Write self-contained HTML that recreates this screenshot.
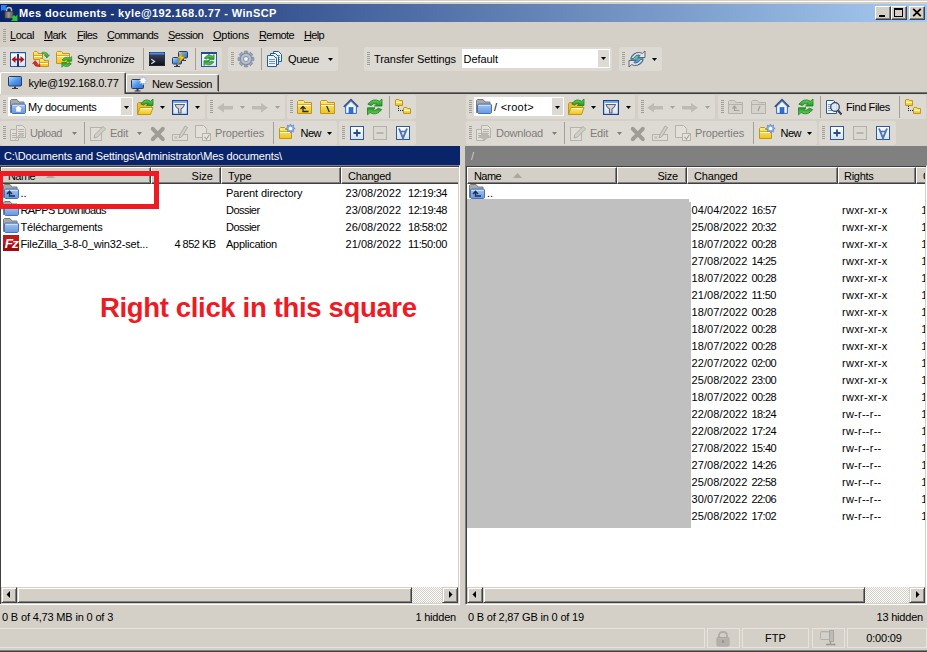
<!DOCTYPE html>
<html><head><meta charset="utf-8"><title>WinSCP</title>
<style>
html,body{margin:0;padding:0}
body{width:927px;height:652px;overflow:hidden;background:#d4d0c8;position:relative;font:11px "Liberation Sans",sans-serif;color:#000}
body>*{position:absolute;box-sizing:border-box}
.t{white-space:nowrap;line-height:13px;height:13px}
#tb{left:0;top:4px;width:927px;height:18px;background:linear-gradient(90deg,#0a246a 0%,#a6caf0 100%)}
body::before{content:"";position:absolute;left:0;top:1px;width:927px;height:1px;background:#fff}
.cb{width:16px;height:14px;background:#d4d0c8;border:1px solid;border-color:#fff #404040 #404040 #fff;box-shadow:inset -1px -1px 0 #808080}
.cb svg{position:absolute;left:0;top:0}
.band{background:#dddad4;border-radius:2.500px}
.grip{width:3px;height:14px;background:repeating-linear-gradient(180deg,#a19e98 0,#a19e98 1px,transparent 1px,transparent 2px)}
.sep{width:1px;background:#a3a09a}
.a{display:block}
.ic{display:block;overflow:visible}
#tabline{left:0;top:92px;width:927px;height:2px;background:#707070;border-bottom:1px solid #404040}
.tab{background:#d4d0c8;border:1px solid;border-color:#fff #404040 #d4d0c8 #fff;box-shadow:inset -1px 0 0 #808080;border-radius:2px 2px 0 0}
.tab.act{border-bottom:0}
.list{background:#fff;border:1px solid;border-color:#808080 #fff #fff #808080;box-shadow:inset 1px 1px 0 #404040,inset -1px -1px 0 #d4d0c8}
.hd{height:17px;background:#d4d0c8;border:1px solid;border-color:#fff #404040 #404040 #fff;box-shadow:inset -1px -1px 0 #808080}
.sbtrack{height:16px;background-color:#ebe9e5;background-image:repeating-conic-gradient(#fff 0 25%,#d4d0c8 0 50%);background-size:2px 2px}
.sbbtn{width:16px;height:16px;background:#d4d0c8;border:1px solid;border-color:#d4d0c8 #404040 #404040 #d4d0c8;box-shadow:inset 1px 1px 0 #fff,inset -1px -1px 0 #808080}
.sbbtn svg{position:absolute;left:-1px;top:-1px}
.sc{height:20px;border:1px solid #e6e4de}
</style></head>
<body>
<svg width="0" height="0" style="position:absolute"><defs>
<linearGradient id="gy" x1="0" y1="0" x2="0" y2="1"><stop offset="0" stop-color="#ffec80"/><stop offset="1" stop-color="#f0c418"/></linearGradient>
<linearGradient id="gb" x1="0" y1="0" x2="0" y2="1"><stop offset="0" stop-color="#a8c6ef"/><stop offset="1" stop-color="#6599de"/></linearGradient>
<linearGradient id="gs" x1="0" y1="0" x2="1" y2="1"><stop offset="0" stop-color="#bfe0ff"/><stop offset="0.5" stop-color="#4f96ee"/><stop offset="1" stop-color="#2a6fd0"/></linearGradient>
<linearGradient id="gg" x1="0" y1="0" x2="0" y2="1"><stop offset="0" stop-color="#6fd45f"/><stop offset="1" stop-color="#1f9a25"/></linearGradient>
<linearGradient id="gk" x1="0" y1="0" x2="0" y2="1"><stop offset="0" stop-color="#414c66"/><stop offset="1" stop-color="#0c0f18"/></linearGradient>
<linearGradient id="gl" x1="0" y1="0" x2="1" y2="0"><stop offset="0" stop-color="#4a4a4a"/><stop offset="0.45" stop-color="#9a9a9a"/><stop offset="1" stop-color="#4c4c4c"/></linearGradient>
<linearGradient id="gw" x1="0" y1="0" x2="0" y2="1"><stop offset="0" stop-color="#ffffff"/><stop offset="1" stop-color="#d6e4f7"/></linearGradient>
</defs></svg>
<div id="tb"></div>
<span class="t" style="left:19px;top:7px;letter-spacing:0.38px;color:#fff;font-weight:bold">Mes documents - kyle@192.168.0.77 - WinSCP</span>
<div class="cb" style="left:875px;top:6px"><svg width="14" height="12"><rect x="3" y="8" width="6" height="2" fill="#000"/></svg></div>
<div class="cb" style="left:891px;top:6px"><svg width="14" height="12"><path d="M2 1h9v9H2z M3 3v6h7V3z" fill="#000" fill-rule="evenodd"/></svg></div>
<div class="cb" style="left:909px;top:6px"><svg width="14" height="12"><path d="M3.200 1.800l7.600 7.400M10.800 1.800l-7.600 7.400" stroke="#000" stroke-width="1.800" fill="none"/></svg></div>
<svg class="ic" style="left:1px;top:5px" width="16" height="16" viewBox="0 0 16 16"><path d="M5.500 7.500V5q0-2.500 2.500-2.500T10.500 5v2.500" fill="none" stroke="#b9b9b9" stroke-width="1.500"/><rect x="3.500" y="6.500" width="9" height="6.800" rx=".6" fill="url(#gl)" stroke="#2e2e2e" stroke-width=".6"/><path d="M0 0h6.500L4.500 2 6 3.500 3.500 6 2 4.500 0 6.500z" fill="#2d82f5"/><path d="M16.500 16H10l2-2-1.500-1.500 2.500-2.500 1.500 1.500 2-2z" fill="#2fc32f"/></svg>
<div class="grip" style="left:3px;top:29px"></div>
<span class="t" style="left:10px;top:29px;letter-spacing:-0.46px"><u>L</u>ocal</span>
<span class="t" style="left:44px;top:29px;letter-spacing:-0.61px"><u>M</u>ark</span>
<span class="t" style="left:77px;top:29px;letter-spacing:-0.64px"><u>F</u>iles</span>
<span class="t" style="left:107px;top:29px;letter-spacing:-0.65px"><u>C</u>ommands</span>
<span class="t" style="left:168px;top:29px;letter-spacing:-0.59px"><u>S</u>ession</span>
<span class="t" style="left:213px;top:29px;letter-spacing:-0.27px"><u>O</u>ptions</span>
<span class="t" style="left:259px;top:29px;letter-spacing:-0.59px"><u>R</u>emote</span>
<span class="t" style="left:304px;top:29px;letter-spacing:-0.66px"><u>H</u>elp</span>
<div class="band" style="left:0px;top:47px;width:222px;height:24px"></div>
<div class="grip" style="left:3px;top:52px"></div>
<svg class="ic" style="left:10px;top:52px" width="16" height="16" viewBox="0 0 16 16"><rect x=".5" y=".5" width="15" height="14" fill="url(#gw)" stroke="#2c5aa0"/><rect x="7" y="0" width="2" height="15" fill="#1a3a80"/><rect x="1" y="1" width="14" height="1" fill="#bcd3f2"/><path d="M1.500 7.500L5.500 4v2.500h5V4l4 3.500-4 3.500V8.500h-5V11z" fill="#b01414"/></svg>
<svg class="ic" style="left:33px;top:51px" width="16" height="16" viewBox="0 0 16 16"><path d="M0.5 8.5V1.5l1-1h2.5l1 1v1h4.5v6z" fill="url(#gy)" stroke="#c4951a"/><path d="M1 4.5h8" stroke="#d9aa22"/><path d="M1 5.5h8" stroke="#fffce6"/><path d="M6.5 15.5V8.5l1-1h2.5l1 1v1h4.5v6z" fill="url(#gy)" stroke="#c4951a"/><path d="M7 11.5h8" stroke="#d9aa22"/><path d="M7 12.5h8" stroke="#fffce6"/><path d="M9 1.200h2.500q3.200 0 3.600 2.800h1.400l-2.600 3-2.600-3h1.400q-.3-1.100-1.500-1.100H9z" fill="url(#gg)" stroke="#1b7d22" stroke-width=".5"/><path d="M9 1.200h2.500q3.200 0 3.600 2.800h1.400l-2.600 3-2.600-3h1.400q-.3-1.100-1.500-1.100H9z" transform="rotate(180 8 8.300)" fill="#e02828" stroke="#a31212" stroke-width=".5"/></svg>
<svg class="ic" style="left:56px;top:51px" width="16" height="16" viewBox="0 0 16 16"><path d="M0.5 12.5V1.5l1-1h4l1 1v1h7v10z" fill="url(#gy)" stroke="#c4951a"/><path d="M1 4.5h12" stroke="#d9aa22"/><path d="M1 5.5h12" stroke="#fffce6"/><g transform="translate(5.5 5.5) scale(0.68)"><path d="M12.500 2.200Q6-1.500 .8 5.200l3.400 1.300Q6.500 3.800 9.800 4.800L7.500 7H15V0z" fill="url(#gg)" stroke="#1b7d22" stroke-width="0.88" stroke-linejoin="round"/><path d="M12.500 2.200Q6-1.500 .8 5.200l3.400 1.300Q6.500 3.800 9.800 4.800L7.500 7H15V0z" transform="rotate(180 7.750 7.900)" fill="url(#gg)" stroke="#1b7d22" stroke-width="0.88" stroke-linejoin="round"/></g></svg>
<span class="t" style="left:77px;top:53px;letter-spacing:-0.28px;">Synchronize</span>
<div class="sep" style="left:143px;top:48px;height:22px"></div>
<svg class="ic" style="left:149px;top:52px" width="16" height="16" viewBox="0 0 16 16"><rect x=".3" y=".3" width="15.400" height="13.400" fill="url(#gk)" stroke="#0a0f20" stroke-width=".6"/><rect x=".6" y=".6" width="14.800" height="1.900" fill="#4a8cf0"/><path d="M2.300 7.300l3.300 2.200-3.300 2.200" fill="none" stroke="#e4e4e4" stroke-width="1.100"/></svg>
<svg class="ic" style="left:172px;top:51px" width="16" height="16" viewBox="0 0 16 16"><rect x="6.5" y="0.5" width="9" height="6.5" rx="1" fill="url(#gs)" stroke="#2a3a58"/><path d="M10.0 7.5v1.500h-2v1h6v-1h-2v-1.500z" fill="#2a3a58"/><rect x="0.5" y="6.5" width="9" height="6.5" rx="1" fill="url(#gs)" stroke="#2a3a58"/><path d="M4.0 13.5v1.500h-2v1h6v-1h-2v-1.500z" fill="#2a3a58"/><path d="M11.500 1l-6.300 6.300h3.300l-3.300 6.500 7.800-8.300H9.600z" fill="#f8c822" stroke="#b98a08" stroke-width=".7" stroke-linejoin="round"/></svg>
<div class="sep" style="left:195px;top:48px;height:22px"></div>
<svg class="ic" style="left:201px;top:52px" width="16" height="16" viewBox="0 0 16 16"><rect x=".5" y=".5" width="15" height="14" fill="url(#gw)" stroke="#2c5aa0"/><rect x="0" y="0" width="16" height="2" fill="#244a94"/><path d="M8 2v12" stroke="#244a94" stroke-dasharray="2 1"/><g transform="translate(2.6 2.5) scale(0.7)"><path d="M12.500 2.200Q6-1.500 .8 5.200l3.400 1.300Q6.500 3.800 9.800 4.800L7.500 7H15V0z" fill="url(#gg)" stroke="#1b7d22" stroke-width="0.86" stroke-linejoin="round"/><path d="M12.500 2.200Q6-1.500 .8 5.200l3.400 1.300Q6.500 3.800 9.800 4.800L7.500 7H15V0z" transform="rotate(180 7.750 7.900)" fill="url(#gg)" stroke="#1b7d22" stroke-width="0.86" stroke-linejoin="round"/></g></svg>
<div class="band" style="left:228px;top:47px;width:110px;height:24px"></div>
<div class="grip" style="left:231px;top:52px"></div>
<svg class="ic" style="left:238px;top:51px" width="16" height="16" viewBox="0 0 16 16"><g transform="translate(8 8)"><g fill="#97a3b8" stroke="#6d7a92" stroke-width=".5"><rect x="-1.800" y="-8" width="3.600" height="4" rx=".6" transform="rotate(0)"/><rect x="-1.800" y="-8" width="3.600" height="4" rx=".6" transform="rotate(45)"/><rect x="-1.800" y="-8" width="3.600" height="4" rx=".6" transform="rotate(90)"/><rect x="-1.800" y="-8" width="3.600" height="4" rx=".6" transform="rotate(135)"/><rect x="-1.800" y="-8" width="3.600" height="4" rx=".6" transform="rotate(180)"/><rect x="-1.800" y="-8" width="3.600" height="4" rx=".6" transform="rotate(225)"/><rect x="-1.800" y="-8" width="3.600" height="4" rx=".6" transform="rotate(270)"/><rect x="-1.800" y="-8" width="3.600" height="4" rx=".6" transform="rotate(315)"/><circle r="5.800"/></g><circle r="5" fill="#b7c0d0"/><circle r="2.600" fill="#dddad4" stroke="#7d8aa3" stroke-width=".8"/><circle r="1.500" fill="#f4f3f0"/></g></svg>
<div class="sep" style="left:261px;top:48px;height:22px"></div>
<svg class="ic" style="left:267px;top:51px" width="16" height="16" viewBox="0 0 16 16"><path d="M6.5 0.5h5l3 3v7h-8z" fill="#eef4fc" stroke="#2c5aa0"/><path d="M8 4.5h5" stroke="#6a93cf"/><path d="M8 6.5h5" stroke="#6a93cf"/><path d="M8 8.5h5" stroke="#6a93cf"/><path d="M3.5 2.5h5l3 3v8h-8z" fill="#eef4fc" stroke="#2c5aa0"/><path d="M5 6.5h5" stroke="#6a93cf"/><path d="M5 8.5h5" stroke="#6a93cf"/><path d="M5 10.5h5" stroke="#6a93cf"/><path d="M0.5 4.5h6l3 3v8h-9z" fill="#eef4fc" stroke="#2c5aa0"/><path d="M2 8.5h6" stroke="#6a93cf"/><path d="M2 10.5h6" stroke="#6a93cf"/><path d="M2 12.5h6" stroke="#6a93cf"/></svg>
<span class="t" style="left:288px;top:53px;letter-spacing:-0.4px;">Queue</span>
<svg class="a" style="left:327px;top:58px" width="7" height="4" viewBox="0 0 7 4"><path d="M1 0h5L3.500 3z" fill="#000"/></svg>
<div class="band" style="left:364px;top:47px;width:248px;height:24px"></div>
<div class="grip" style="left:367px;top:52px"></div>
<span class="t" style="left:374px;top:53px;letter-spacing:-0.08px;">Transfer Settings</span>
<div style="left:462px;top:49px;width:148px;height:19px;background:#fff;"></div>
<span class="t" style="left:463.5px;top:53px;letter-spacing:-0.05px;">Default</span>
<div style="left:598px;top:50px;width:11px;height:17px;background:#dddad4;"></div>
<svg class="a" style="left:600px;top:57px" width="7" height="4" viewBox="0 0 7 4"><path d="M1 0h5L3.500 3z" fill="#000"/></svg>
<div class="band" style="left:619px;top:47px;width:43px;height:24px"></div>
<div class="grip" style="left:622px;top:52px"></div>
<svg class="ic" style="left:629px;top:51px" width="16" height="16" viewBox="0 0 16 16"><circle cx="8" cy="8" r="6" fill="#4a94f0" stroke="#2b5fae" stroke-width=".8"/><path d="M3 7l2.500-2.500 3.500.5-1 2-3 1.500zM9.500 8.500l3.500-1.500.5 3-2.500 2.500zM5 11l2 .5.500 2-2-.5z" fill="#62d45c"/><path d="M13.400 2.400Q7-1 1.800 7.200l2.500.6Q7 3 11.200 4.400L9 6.500h7V0z" fill="#dfe3ea" stroke="#4f5b72" stroke-width=".9" stroke-linejoin="round"/><g transform="rotate(180 8 8)"><path d="M13.400 2.400Q7-1 1.800 7.200l2.500.6Q7 3 11.200 4.400L9 6.500h7V0z" fill="#dfe3ea" stroke="#4f5b72" stroke-width=".9" stroke-linejoin="round"/></g></svg>
<svg class="a" style="left:651px;top:58px" width="7" height="4" viewBox="0 0 7 4"><path d="M1 0h5L3.500 3z" fill="#000"/></svg>
<div id="tabline"></div>
<div class="tab act" style="left:0px;top:72px;width:126px;height:22px"></div>
<div class="tab" style="left:126px;top:74px;width:93px;height:18px"></div>
<svg class="ic" style="left:7px;top:75px" width="16" height="16" viewBox="0 0 16 16"><rect x="1.5" y="1.5" width="13" height="9.5" rx="1" fill="url(#gs)" stroke="#2a3a58"/><path d="M7.0 11.5v1.500h-2v1h6v-1h-2v-1.500z" fill="#2a3a58"/></svg>
<span class="t" style="left:28.5px;top:76.5px;letter-spacing:-0.29px;">kyle@192.168.0.77</span>
<svg class="ic" style="left:131px;top:76px" width="16" height="16" viewBox="0 0 16 16"><rect x="0.5" y="3.5" width="12" height="9" rx="1" fill="url(#gs)" stroke="#2a3a58"/><path d="M5.5 13v1.500h-2v1h6v-1h-2v-1.500z" fill="#2a3a58"/><path d="M12 0l.9 2.300 2.300-.9-.9 2.300 2.300.9-2.300.9.900 2.300-2.300-.9-.9 2.300-.9-2.300-2.300.9.900-2.300-2.300-.9 2.300-.9-.9-2.300 2.300.9z" fill="#fff" stroke="#8fa8d0" stroke-width=".5"/></svg>
<span class="t" style="left:152px;top:77.5px;letter-spacing:-0.38px;">New Session</span>
<div class="band" style="left:0px;top:95px;width:205px;height:24px"></div>
<div class="grip" style="left:3px;top:100px"></div>
<div style="left:8px;top:97px;width:125px;height:19px;background:#fff;"></div>
<svg class="ic" style="left:10px;top:99px" width="16" height="16" viewBox="0 0 16 16"><path d="M.5 13.500V1.500l1-1h5.500l2 2.500h5v10.500z" fill="#aaa9a6" stroke="#7c7b78"/><path d="M2.500 14.500h12l1-1V6l-1-1h-12l-1 1v7.500z" fill="url(#gb)" stroke="#3f74c4"/><path d="M2.500 6.500h12" stroke="#d3e3f8" opacity=".9"/><path d="M8.500 6.300l4.200 3.500h-1.500v3.200h-5.400v-3.200h-1.500z" fill="#fff" stroke="#7a8cab" stroke-width=".6"/></svg>
<span class="t" style="left:28px;top:101px;letter-spacing:-0.25px;">My documents</span>
<div style="left:121px;top:98px;width:11px;height:17px;background:#dddad4;"></div>
<svg class="a" style="left:123px;top:106px" width="7" height="4" viewBox="0 0 7 4"><path d="M1 0h5L3.500 3z" fill="#000"/></svg>
<svg class="ic" style="left:137px;top:99px" width="16" height="16" viewBox="0 0 16 16"><path d="M.5 15.500V4.500l1-1h3.500l1 1.500h8.500v3.500" fill="#eebf2c" stroke="#c4951a"/><path d="M.5 15.500l2.500-7h13l-2.500 7z" fill="url(#gy)" stroke="#c4951a"/><path d="M3.700 9.500h11" stroke="#fffbd8"/><path d="M13.500 2.300Q8-1.500 3.800 5l2.700 1Q8.500 3.500 11.300 4.600L9.500 6.500H16V0z" fill="url(#gg)" stroke="#1b7d22" stroke-width=".8" stroke-linejoin="round"/></svg>
<svg class="a" style="left:159px;top:106px" width="7" height="4" viewBox="0 0 7 4"><path d="M1 0h5L3.500 3z" fill="#000"/></svg>
<svg class="ic" style="left:172px;top:100px" width="16" height="16" viewBox="0 0 16 16"><rect x=".6" y=".6" width="14.800" height="13.800" fill="url(#gw)" stroke="#1f448f" stroke-width="1.200"/><rect x="1.200" y="1.200" width="13.600" height="1.600" fill="#5b97ee"/><path d="M3 4.500h9.500q-.5 2.500-3.500 4.500v4h-2.500v-4q-3-2-3.500-4.500z" fill="#d3d5d9" stroke="#5f636c" stroke-width="1.100" stroke-linejoin="round"/></svg>
<svg class="a" style="left:194px;top:106px" width="7" height="4" viewBox="0 0 7 4"><path d="M1 0h5L3.500 3z" fill="#000"/></svg>
<div class="band" style="left:207px;top:95px;width:78px;height:24px"></div>
<div class="grip" style="left:210px;top:100px"></div>
<svg class="ic" style="left:217px;top:99px" width="16" height="16" viewBox="0 0 16 16"><path d="M0 8.700L7 4v3h9v3.400H7v3z" fill="#bebbb5"/></svg>
<svg class="a" style="left:239px;top:106px" width="7" height="4" viewBox="0 0 7 4"><path d="M1 0h5L3.500 3z" fill="#a5a29c"/></svg>
<svg class="ic" style="left:252px;top:99px" width="16" height="16" viewBox="0 0 16 16"><path d="M16 8.700L9 4v3H0v3.400h9v3z" fill="#bebbb5"/></svg>
<svg class="a" style="left:274px;top:106px" width="7" height="4" viewBox="0 0 7 4"><path d="M1 0h5L3.500 3z" fill="#a5a29c"/></svg>
<div class="band" style="left:287px;top:95px;width:129px;height:24px"></div>
<div class="grip" style="left:290px;top:100px"></div>
<svg class="ic" style="left:296.5px;top:99px" width="16" height="16" viewBox="0 0 16 16"><path d="M0.5 14.5V2.5l1-1h5l1 1v1h7v11z" fill="url(#gy)" stroke="#c4951a"/><path d="M1 5.5h13" stroke="#d9aa22"/><path d="M1 6.5h13" stroke="#fffce6"/><path d="M6 8v4.500h5.500M3.500 10l2.500-2.500 2.500 2.500" fill="none" stroke="#1c2c4c" stroke-width="1.300"/></svg>
<svg class="ic" style="left:320px;top:99px" width="16" height="16" viewBox="0 0 16 16"><path d="M0.5 14.5V2.5l1-1h5l1 1v1h7v11z" fill="url(#gy)" stroke="#c4951a"/><path d="M1 5.5h13" stroke="#d9aa22"/><path d="M1 6.5h13" stroke="#fffce6"/><path d="M6.700 7l2.600 6" stroke="#1c2c4c" stroke-width="1.300"/></svg>
<svg class="ic" style="left:343px;top:98px" width="16" height="16" viewBox="0 0 16 16"><path d="M2.500 8v7.500h11V8L8 2.500z" fill="#b4cff3" stroke="#4a78c0"/><path d="M3.500 9v5.500h9V9L8 4.500z" fill="#f4f8fe"/><path d="M.8 8.800L8 1.600l7.200 7.200" fill="none" stroke="#3b5684" stroke-width="1.700"/><rect x="6" y="9.500" width="4" height="6" fill="#2f6fd8" stroke="#2458b8" stroke-width=".6"/></svg>
<svg class="ic" style="left:367px;top:99px" width="16" height="16" viewBox="0 0 16 16"><path d="M12.500 2.200Q6-1.500 .8 5.200l3.400 1.300Q6.500 3.800 9.800 4.800L7.500 7H15V0z" fill="url(#gg)" stroke="#1b7d22" stroke-width=".8" stroke-linejoin="round"/><path d="M12.500 2.200Q6-1.500 .8 5.200l3.400 1.300Q6.500 3.800 9.800 4.800L7.500 7H15V0z" transform="rotate(180 7.750 7.900)" fill="url(#gg)" stroke="#1b7d22" stroke-width=".8" stroke-linejoin="round"/></svg>
<div class="sep" style="left:389px;top:96px;height:22px"></div>
<svg class="ic" style="left:395px;top:99px" width="16" height="16" viewBox="0 0 16 16"><path d="M0.5 6.5V1l.5-.5h3l.5.500v.5h3v5z" fill="url(#gy)" stroke="#c4951a"/><path d="M1 3.5h6" stroke="#fffce0"/><path d="M8.5 14.5V9l.5-.5h3l.5.500v.5h3v5z" fill="url(#gy)" stroke="#c4951a"/><path d="M9 11.5h6" stroke="#fffce0"/><path d="M3 7h1v1h-1zM3 9h1v1h-1zM3 11h1v1h-1zM5 11h1v1h-1zM7 11h1v1h-1z" fill="#222"/></svg>
<div class="band" style="left:0px;top:121px;width:337px;height:24px"></div>
<div class="grip" style="left:3px;top:126px"></div>
<svg class="ic" style="left:10px;top:125px" width="16" height="16" viewBox="0 0 16 16"><path d="M0.5 4.5h5l3 3v8h-8z" fill="#e3e0da" stroke="#b5b2ac"/><path d="M2 8.5h5" stroke="#b5b2ac"/><path d="M2 10.5h5" stroke="#b5b2ac"/><path d="M2 12.5h5" stroke="#b5b2ac"/><path d="M6.5 0.5h6l3 3v9h-9z" fill="#e3e0da" stroke="#b5b2ac"/><path d="M8 4.5h6" stroke="#b5b2ac"/><path d="M8 6.5h6" stroke="#b5b2ac"/><path d="M8 8.5h6" stroke="#b5b2ac"/><path d="M8 10.5h6" stroke="#b5b2ac"/><path d="M5 15l5-5v2.500h3V9h-3z" fill="#c6c3bd" stroke="#b5b2ac" stroke-width=".5"/></svg>
<span class="t" style="left:30px;top:127px;letter-spacing:-0.48px;color:#7f7d7a">Upload</span>
<svg class="a" style="left:71px;top:132px" width="7" height="4" viewBox="0 0 7 4"><path d="M1 0h5L3.500 3z" fill="#7f7d7a"/></svg>
<div class="sep" style="left:84px;top:122px;height:22px"></div>
<svg class="ic" style="left:90px;top:125px" width="16" height="16" viewBox="0 0 16 16"><rect x=".5" y="2.500" width="11" height="13" fill="#e0ddd7" stroke="#b5b2ac"/><path d="M4 13l1-3.500L13 1.500l2.500 2.500-8 8z" fill="#d2cfc9" stroke="#aaa7a1" stroke-width=".9"/></svg>
<span class="t" style="left:110px;top:127px;letter-spacing:-0.24px;color:#7f7d7a">Edit</span>
<svg class="a" style="left:136px;top:132px" width="7" height="4" viewBox="0 0 7 4"><path d="M1 0h5L3.500 3z" fill="#7f7d7a"/></svg>
<svg class="ic" style="left:149.5px;top:126px" width="16" height="16" viewBox="0 0 16 16"><path d="M2.800 2.800l10 10.400M12.800 2.800L2.800 13.200" stroke="#a09d97" stroke-width="4" stroke-linecap="round"/></svg>
<svg class="ic" style="left:172px;top:125px" width="16" height="16" viewBox="0 0 16 16"><rect x=".5" y="9.500" width="15" height="6" fill="#e0ddd7" stroke="#b5b2ac"/><path d="M7 13l.8-3L13 1l2.500 1.500-5.500 9z" fill="#d2cfc9" stroke="#aaa7a1" stroke-width=".9"/><path d="M2.500 11l3 3m0-3l-3 3" stroke="#b5b2ac" stroke-width=".9"/></svg>
<svg class="ic" style="left:195px;top:125px" width="16" height="16" viewBox="0 0 16 16"><path d="M.5 .5h8l3 3v9H.5z" fill="#e3e0da" stroke="#b5b2ac"/><rect x="7.500" y="8.500" width="8" height="7" fill="#e6e3dd" stroke="#b5b2ac"/><path d="M9.500 12l2 2 3-4.500" fill="none" stroke="#aaa7a1" stroke-width="1.200"/></svg>
<span class="t" style="left:215px;top:127px;letter-spacing:-0.11px;color:#7f7d7a">Properties</span>
<div class="sep" style="left:273px;top:122px;height:22px"></div>
<svg class="ic" style="left:279px;top:124px" width="16" height="16" viewBox="0 0 16 16"><path d="M0.5 14.5V4.5l1-1h4l1 1v1h6v9z" fill="url(#gy)" stroke="#c4951a"/><path d="M1 7.5h11" stroke="#d9aa22"/><path d="M1 8.5h11" stroke="#fffce6"/><g transform="translate(11.500 4.500)"><path d="M0-4.500l1.100 2 2.100-.9-.5 2.200 2 1.200-2 1.200.5 2.200-2.100-.9-1.100 2-1.100-2-2.100.9.500-2.200-2-1.200 2-1.200-.5-2.200 2.100.9z" fill="#8fb2e8" stroke="#4f7cc4" stroke-width=".6"/><circle r="1.700" fill="#fff"/></g></svg>
<span class="t" style="left:300.5px;top:127px;letter-spacing:-0.5px;">New</span>
<svg class="a" style="left:326px;top:132px" width="7" height="4" viewBox="0 0 7 4"><path d="M1 0h5L3.500 3z" fill="#000"/></svg>
<div class="band" style="left:339px;top:121px;width:77px;height:24px"></div>
<div class="grip" style="left:342px;top:126px"></div>
<svg class="ic" style="left:350px;top:126px" width="16" height="16" viewBox="0 0 16 16"><rect x=".5" y=".5" width="13" height="13" fill="url(#gw)" stroke="#2c5aa0"/><path d="M7 3.500v7M3.500 7h7" stroke="#244a94" stroke-width="1.800"/></svg>
<svg class="ic" style="left:373px;top:126px" width="16" height="16" viewBox="0 0 16 16"><rect x=".5" y=".5" width="13" height="13" fill="#dbd8d2" stroke="#b5b2ac"/><path d="M3.500 7h7" stroke="#b5b2ac" stroke-width="1.800"/></svg>
<svg class="ic" style="left:396px;top:126px" width="16" height="16" viewBox="0 0 16 16"><rect x=".5" y=".5" width="13" height="13" fill="url(#gw)" stroke="#2c5aa0"/><path d="M3 2.500l4 9.500 4-9.500" fill="none" stroke="#4f72b4" stroke-width="1.900"/><path d="M4 5.500h6" stroke="#4f72b4" stroke-width="1.500"/></svg>
<div class="band" style="left:466px;top:95px;width:169px;height:24px"></div>
<div class="grip" style="left:469px;top:100px"></div>
<div style="left:474px;top:97px;width:90px;height:19px;background:#fff;"></div>
<svg class="ic" style="left:476px;top:99px" width="16" height="16" viewBox="0 0 16 16"><path d="M.5 13.500V1.500l1-1h5.500l2 2.500h5v10.500z" fill="#aaa9a6" stroke="#7c7b78"/><path d="M2.500 14.500h12l1-1V6l-1-1h-12l-1 1v7.500z" fill="url(#gb)" stroke="#3f74c4"/><path d="M2.500 6.500h12" stroke="#d3e3f8" opacity=".9"/></svg>
<span class="t" style="left:494px;top:101px;letter-spacing:0.26px;">/ &lt;root&gt;</span>
<div style="left:552px;top:98px;width:11px;height:17px;background:#dddad4;"></div>
<svg class="a" style="left:554px;top:106px" width="7" height="4" viewBox="0 0 7 4"><path d="M1 0h5L3.500 3z" fill="#000"/></svg>
<svg class="ic" style="left:568px;top:99px" width="16" height="16" viewBox="0 0 16 16"><path d="M.5 15.500V4.500l1-1h3.500l1 1.500h8.500v3.500" fill="#eebf2c" stroke="#c4951a"/><path d="M.5 15.500l2.500-7h13l-2.500 7z" fill="url(#gy)" stroke="#c4951a"/><path d="M3.700 9.500h11" stroke="#fffbd8"/><path d="M13.500 2.300Q8-1.500 3.800 5l2.700 1Q8.500 3.500 11.300 4.600L9.500 6.500H16V0z" fill="url(#gg)" stroke="#1b7d22" stroke-width=".8" stroke-linejoin="round"/></svg>
<svg class="a" style="left:590px;top:106px" width="7" height="4" viewBox="0 0 7 4"><path d="M1 0h5L3.500 3z" fill="#000"/></svg>
<svg class="ic" style="left:603px;top:100px" width="16" height="16" viewBox="0 0 16 16"><rect x=".6" y=".6" width="14.800" height="13.800" fill="url(#gw)" stroke="#1f448f" stroke-width="1.200"/><rect x="1.200" y="1.200" width="13.600" height="1.600" fill="#5b97ee"/><path d="M3 4.500h9.500q-.5 2.500-3.500 4.500v4h-2.500v-4q-3-2-3.500-4.500z" fill="#d3d5d9" stroke="#5f636c" stroke-width="1.100" stroke-linejoin="round"/></svg>
<svg class="a" style="left:625px;top:106px" width="7" height="4" viewBox="0 0 7 4"><path d="M1 0h5L3.500 3z" fill="#000"/></svg>
<div class="band" style="left:638px;top:95px;width:77px;height:24px"></div>
<div class="grip" style="left:641px;top:100px"></div>
<svg class="ic" style="left:647px;top:99px" width="16" height="16" viewBox="0 0 16 16"><path d="M0 8.700L7 4v3h9v3.400H7v3z" fill="#bebbb5"/></svg>
<svg class="a" style="left:669px;top:106px" width="7" height="4" viewBox="0 0 7 4"><path d="M1 0h5L3.500 3z" fill="#a5a29c"/></svg>
<svg class="ic" style="left:682px;top:99px" width="16" height="16" viewBox="0 0 16 16"><path d="M16 8.700L9 4v3H0v3.400h9v3z" fill="#bebbb5"/></svg>
<svg class="a" style="left:704px;top:106px" width="7" height="4" viewBox="0 0 7 4"><path d="M1 0h5L3.500 3z" fill="#a5a29c"/></svg>
<div class="band" style="left:718px;top:95px;width:208px;height:24px"></div>
<div class="grip" style="left:721px;top:100px"></div>
<svg class="ic" style="left:728px;top:99px" width="16" height="16" viewBox="0 0 16 16"><path d="M0.5 14.5V2.5l1-1h5l1 1v1h7v11z" fill="#d5d2cc" stroke="#b5b2ac"/><path d="M1 5.5h13" stroke="#b5b2ac"/><path d="M6.500 7.500v4h5M4.500 9.500l2-2.300 2 2.300" fill="none" stroke="#a29f99" stroke-width="1.200"/></svg>
<svg class="ic" style="left:751px;top:99px" width="16" height="16" viewBox="0 0 16 16"><path d="M0.5 14.5V2.5l1-1h5l1 1v1h7v11z" fill="#d5d2cc" stroke="#b5b2ac"/><path d="M1 5.5h13" stroke="#b5b2ac"/><path d="M9 7l-2 5" stroke="#a29f99" stroke-width="1.200"/></svg>
<svg class="ic" style="left:774px;top:98px" width="16" height="16" viewBox="0 0 16 16"><path d="M2.500 8v7.500h11V8L8 2.500z" fill="#b4cff3" stroke="#4a78c0"/><path d="M3.500 9v5.500h9V9L8 4.500z" fill="#f4f8fe"/><path d="M.8 8.800L8 1.600l7.200 7.200" fill="none" stroke="#3b5684" stroke-width="1.700"/><rect x="6" y="9.500" width="4" height="6" fill="#2f6fd8" stroke="#2458b8" stroke-width=".6"/></svg>
<svg class="ic" style="left:798px;top:99px" width="16" height="16" viewBox="0 0 16 16"><path d="M12.500 2.200Q6-1.500 .8 5.200l3.400 1.300Q6.500 3.800 9.800 4.800L7.500 7H15V0z" fill="url(#gg)" stroke="#1b7d22" stroke-width=".8" stroke-linejoin="round"/><path d="M12.500 2.200Q6-1.500 .8 5.200l3.400 1.300Q6.500 3.800 9.800 4.800L7.500 7H15V0z" transform="rotate(180 7.750 7.900)" fill="url(#gg)" stroke="#1b7d22" stroke-width=".8" stroke-linejoin="round"/></svg>
<div class="sep" style="left:820px;top:96px;height:22px"></div>
<svg class="ic" style="left:826px;top:100px" width="16" height="16" viewBox="0 0 16 16"><path d="M0.5 0.5h7l3 3v10h-10z" fill="#f4f8fe" stroke="#2c5aa0"/><path d="M2 4.5h7" stroke="#7da2d8"/><path d="M2 6.5h7" stroke="#7da2d8"/><path d="M2 8.5h7" stroke="#7da2d8"/><path d="M2 10.5h7" stroke="#7da2d8"/><circle cx="9" cy="7" r="4.300" fill="#dcebfb" fill-opacity=".85" stroke="#3a3f4c" stroke-width="1.200"/><path d="M12 10.500l3.500 4" stroke="#3a3f4c" stroke-width="2"/></svg>
<span class="t" style="left:846px;top:101px;letter-spacing:-0.37px;">Find Files</span>
<div class="sep" style="left:899px;top:96px;height:22px"></div>
<svg class="ic" style="left:905px;top:99px" width="16" height="16" viewBox="0 0 16 16"><path d="M0.5 6.5V1l.5-.5h3l.5.500v.5h3v5z" fill="url(#gy)" stroke="#c4951a"/><path d="M1 3.5h6" stroke="#fffce0"/><path d="M8.5 14.5V9l.5-.5h3l.5.500v.5h3v5z" fill="url(#gy)" stroke="#c4951a"/><path d="M9 11.5h6" stroke="#fffce0"/><path d="M3 7h1v1h-1zM3 9h1v1h-1zM3 11h1v1h-1zM5 11h1v1h-1zM7 11h1v1h-1z" fill="#222"/></svg>
<div class="band" style="left:466px;top:121px;width:351px;height:24px"></div>
<div class="grip" style="left:469px;top:126px"></div>
<svg class="ic" style="left:476px;top:125px" width="16" height="16" viewBox="0 0 16 16"><path d="M0.5 4.5h5l3 3v8h-8z" fill="#e3e0da" stroke="#b5b2ac"/><path d="M2 8.5h5" stroke="#b5b2ac"/><path d="M2 10.5h5" stroke="#b5b2ac"/><path d="M2 12.5h5" stroke="#b5b2ac"/><path d="M5.5 0.5h6l3 3v9h-9z" fill="#e3e0da" stroke="#b5b2ac"/><path d="M7 4.5h6" stroke="#b5b2ac"/><path d="M7 6.5h6" stroke="#b5b2ac"/><path d="M7 8.5h6" stroke="#b5b2ac"/><path d="M7 10.5h6" stroke="#b5b2ac"/><path d="M5.500 8h6v3h2.500l-5.500 4.500-5.500-4.500H5.500z" fill="#bab7b1" stroke="#b5b2ac" stroke-width=".5"/></svg>
<span class="t" style="left:496px;top:127px;letter-spacing:-0.24px;color:#7f7d7a">Download</span>
<svg class="a" style="left:551px;top:132px" width="7" height="4" viewBox="0 0 7 4"><path d="M1 0h5L3.500 3z" fill="#7f7d7a"/></svg>
<div class="sep" style="left:564px;top:122px;height:22px"></div>
<svg class="ic" style="left:570px;top:125px" width="16" height="16" viewBox="0 0 16 16"><rect x=".5" y="2.500" width="11" height="13" fill="#e0ddd7" stroke="#b5b2ac"/><path d="M4 13l1-3.500L13 1.500l2.500 2.500-8 8z" fill="#d2cfc9" stroke="#aaa7a1" stroke-width=".9"/></svg>
<span class="t" style="left:590px;top:127px;letter-spacing:-0.24px;color:#7f7d7a">Edit</span>
<svg class="a" style="left:616px;top:132px" width="7" height="4" viewBox="0 0 7 4"><path d="M1 0h5L3.500 3z" fill="#7f7d7a"/></svg>
<svg class="ic" style="left:629.5px;top:126px" width="16" height="16" viewBox="0 0 16 16"><path d="M2.800 2.800l10 10.400M12.800 2.800L2.800 13.200" stroke="#a09d97" stroke-width="4" stroke-linecap="round"/></svg>
<svg class="ic" style="left:652px;top:125px" width="16" height="16" viewBox="0 0 16 16"><rect x=".5" y="9.500" width="15" height="6" fill="#e0ddd7" stroke="#b5b2ac"/><path d="M7 13l.8-3L13 1l2.500 1.500-5.500 9z" fill="#d2cfc9" stroke="#aaa7a1" stroke-width=".9"/><path d="M2.500 11l3 3m0-3l-3 3" stroke="#b5b2ac" stroke-width=".9"/></svg>
<svg class="ic" style="left:675px;top:125px" width="16" height="16" viewBox="0 0 16 16"><path d="M.5 .5h8l3 3v9H.5z" fill="#e3e0da" stroke="#b5b2ac"/><rect x="7.500" y="8.500" width="8" height="7" fill="#e6e3dd" stroke="#b5b2ac"/><path d="M9.500 12l2 2 3-4.500" fill="none" stroke="#aaa7a1" stroke-width="1.200"/></svg>
<span class="t" style="left:695px;top:127px;letter-spacing:-0.11px;color:#7f7d7a">Properties</span>
<div class="sep" style="left:753px;top:122px;height:22px"></div>
<svg class="ic" style="left:759px;top:124px" width="16" height="16" viewBox="0 0 16 16"><path d="M0.5 14.5V4.5l1-1h4l1 1v1h6v9z" fill="url(#gy)" stroke="#c4951a"/><path d="M1 7.5h11" stroke="#d9aa22"/><path d="M1 8.5h11" stroke="#fffce6"/><g transform="translate(11.500 4.500)"><path d="M0-4.500l1.100 2 2.100-.9-.5 2.200 2 1.200-2 1.200.5 2.200-2.100-.9-1.100 2-1.100-2-2.100.9.500-2.200-2-1.200 2-1.200-.5-2.200 2.100.9z" fill="#8fb2e8" stroke="#4f7cc4" stroke-width=".6"/><circle r="1.700" fill="#fff"/></g></svg>
<span class="t" style="left:780.5px;top:127px;letter-spacing:-0.5px;">New</span>
<svg class="a" style="left:806px;top:132px" width="7" height="4" viewBox="0 0 7 4"><path d="M1 0h5L3.500 3z" fill="#000"/></svg>
<div class="band" style="left:819px;top:121px;width:77px;height:24px"></div>
<div class="grip" style="left:822px;top:126px"></div>
<svg class="ic" style="left:830px;top:126px" width="16" height="16" viewBox="0 0 16 16"><rect x=".5" y=".5" width="13" height="13" fill="url(#gw)" stroke="#2c5aa0"/><path d="M7 3.500v7M3.500 7h7" stroke="#244a94" stroke-width="1.800"/></svg>
<svg class="ic" style="left:853px;top:126px" width="16" height="16" viewBox="0 0 16 16"><rect x=".5" y=".5" width="13" height="13" fill="#dbd8d2" stroke="#b5b2ac"/><path d="M3.500 7h7" stroke="#b5b2ac" stroke-width="1.800"/></svg>
<svg class="ic" style="left:876px;top:126px" width="16" height="16" viewBox="0 0 16 16"><rect x=".5" y=".5" width="13" height="13" fill="url(#gw)" stroke="#2c5aa0"/><path d="M3 2.500l4 9.500 4-9.500" fill="none" stroke="#4f72b4" stroke-width="1.900"/><path d="M4 5.500h6" stroke="#4f72b4" stroke-width="1.500"/></svg>
<div style="left:0px;top:146px;width:460px;height:19px;background:#0a246a;"></div>
<span class="t" style="left:4px;top:150px;letter-spacing:-0.14px;color:#fff">C:\Documents and Settings\Administrator\Mes documents\</span>
<div style="left:465px;top:146px;width:462px;height:20px;background:#808080;"></div>
<span class="t" style="left:471px;top:150px;color:#d4d0c8">/</span>
<div class="list" style="left:-1px;top:165px;width:461px;height:440px"></div>
<div class="hd" style="left:1px;top:167px;width:150px"></div>
<div class="hd" style="left:151px;top:167px;width:70px"></div>
<div class="hd" style="left:221px;top:167px;width:120px"></div>
<div class="hd" style="left:341px;top:167px;width:117px;border-right:0;box-shadow:inset 0 -1px 0 #808080"></div>
<span class="t" style="left:8px;top:170px;letter-spacing:-0.59px;">Name</span>
<span class="t" style="left:152px;top:170px;width:61px;text-align:right">Size</span>
<span class="t" style="left:228px;top:170px;letter-spacing:-0.09px;">Type</span>
<span class="t" style="left:348px;top:170px;letter-spacing:-0.24px;">Changed</span>
<svg class="a" style="left:46px;top:173px" width="9" height="5"><path d="M0 5L4.500 0 9 5z" fill="#aca899"/></svg>
<svg class="ic" style="left:3px;top:184px" width="16" height="16" viewBox="0 0 16 16"><path d="M.5 13.500V1.500l1-1h5.500l2 2.500h5v10.500z" fill="#aaa9a6" stroke="#7c7b78"/><path d="M2.500 14.500h12l1-1V6l-1-1h-12l-1 1v7.500z" fill="url(#gb)" stroke="#3f74c4"/><path d="M2.500 6.500h12" stroke="#d3e3f8" opacity=".9"/><path d="M6.500 7.500v4.500h5.500M4 10l2.500-2.800 2.500 2.800" fill="none" stroke="#1c2f55" stroke-width="1.400"/></svg>
<span class="t" style="left:20.5px;top:187px;">..</span>
<span class="t" style="left:226px;top:187px;letter-spacing:-0.07px;">Parent directory</span>
<span class="t" style="left:345.5px;top:187px;letter-spacing:0.05px;">23/08/2022</span>
<span class="t" style="left:408px;top:187px;letter-spacing:-0.48px;">12:19:34</span>
<svg class="ic" style="left:3px;top:201px" width="16" height="16" viewBox="0 0 16 16"><path d="M.5 13.500V1.500l1-1h5.500l2 2.500h5v10.500z" fill="#aaa9a6" stroke="#7c7b78"/><path d="M2.500 14.500h12l1-1V6l-1-1h-12l-1 1v7.500z" fill="url(#gb)" stroke="#3f74c4"/><path d="M2.500 6.500h12" stroke="#d3e3f8" opacity=".9"/></svg>
<span class="t" style="left:20.5px;top:204px;letter-spacing:-0.62px;">RAPPS Downloads</span>
<span class="t" style="left:226px;top:204px;letter-spacing:-0.54px;">Dossier</span>
<span class="t" style="left:345.5px;top:204px;letter-spacing:0.05px;">23/08/2022</span>
<span class="t" style="left:408px;top:204px;letter-spacing:-0.48px;">12:19:48</span>
<svg class="ic" style="left:3px;top:218px" width="16" height="16" viewBox="0 0 16 16"><path d="M.5 13.500V1.500l1-1h5.500l2 2.500h5v10.500z" fill="#aaa9a6" stroke="#7c7b78"/><path d="M2.500 14.500h12l1-1V6l-1-1h-12l-1 1v7.500z" fill="url(#gb)" stroke="#3f74c4"/><path d="M2.500 6.500h12" stroke="#d3e3f8" opacity=".9"/></svg>
<span class="t" style="left:20.5px;top:221px;letter-spacing:-0.2px;">Téléchargements</span>
<span class="t" style="left:226px;top:221px;letter-spacing:-0.54px;">Dossier</span>
<span class="t" style="left:345.5px;top:221px;letter-spacing:0.05px;">26/08/2022</span>
<span class="t" style="left:408px;top:221px;letter-spacing:-0.48px;">18:58:02</span>
<svg class="ic" style="left:3px;top:235px" width="16" height="16" viewBox="0 0 16 16"><rect width="16" height="16" fill="#a00c0c"/><rect x="0" y="0" width="16" height="9" fill="#bd1a1a"/><text x="8.300" y="12.800" font-family="Liberation Sans,sans-serif" font-size="13.500" font-weight="bold" font-style="italic" fill="#fff" text-anchor="middle" letter-spacing="-1">Fz</text></svg>
<span class="t" style="left:20.5px;top:238px;letter-spacing:-0.16px;">FileZilla_3-8-0_win32-set...</span>
<span class="t" style="left:174.5px;top:238px;letter-spacing:-0.53px;">4 852 KB</span>
<span class="t" style="left:226px;top:238px;letter-spacing:-0.26px;">Application</span>
<span class="t" style="left:345.5px;top:238px;letter-spacing:0.05px;">21/08/2022</span>
<span class="t" style="left:408px;top:238px;letter-spacing:-0.38px;">11:50:00</span>
<div class="sbtrack" style="left:1px;top:587px;width:457px"></div>
<div class="sbbtn" style="left:1px;top:587px"><svg width="16" height="16"><path d="M9 4v7L5.500 7.500z" fill="#000"/></svg></div>
<div class="sbbtn" style="left:442px;top:587px"><svg width="16" height="16"><path d="M7 4v7l3.500-3.500z" fill="#000"/></svg></div>
<div class="sbbtn" style="left:17px;top:587px;width:395px"></div>
<span class="t" style="left:2px;top:611px;letter-spacing:-0.16px;">0 B of 4,73 MB in 0 of 3</span>
<span class="t" style="left:380px;top:611px;width:76px;text-align:right;letter-spacing:-0.2px">1 hidden</span>
<div class="list" style="left:465px;top:165px;width:462px;height:440px"></div>
<div class="hd" style="left:467px;top:167px;width:150px"></div>
<div class="hd" style="left:617px;top:167px;width:70px"></div>
<div class="hd" style="left:687px;top:167px;width:151px"></div>
<div class="hd" style="left:838px;top:167px;width:78px"></div>
<div class="hd" style="left:916px;top:167px;width:20px"></div>
<span class="t" style="left:474px;top:170px;letter-spacing:-0.59px;">Name</span>
<span class="t" style="left:616px;top:170px;width:62px;text-align:right;letter-spacing:-0.2px">Size</span>
<span class="t" style="left:694px;top:170px;letter-spacing:-0.16px;">Changed</span>
<span class="t" style="left:844px;top:170px;letter-spacing:-0.28px;">Rights</span>
<span class="t" style="left:923px;top:170px;">O</span>
<svg class="a" style="left:513px;top:173px" width="9" height="5"><path d="M0 5L4.500 0 9 5z" fill="#aca899"/></svg>
<svg class="ic" style="left:469px;top:184px" width="16" height="16" viewBox="0 0 16 16"><path d="M.5 13.500V1.500l1-1h5.500l2 2.500h5v10.500z" fill="#aaa9a6" stroke="#7c7b78"/><path d="M2.500 14.500h12l1-1V6l-1-1h-12l-1 1v7.500z" fill="url(#gb)" stroke="#3f74c4"/><path d="M2.500 6.500h12" stroke="#d3e3f8" opacity=".9"/><path d="M6.500 7.500v4.500h5.500M4 10l2.500-2.800 2.500 2.800" fill="none" stroke="#1c2f55" stroke-width="1.400"/></svg>
<span class="t" style="left:487px;top:187px;">..</span>
<span class="t" style="left:691.5px;top:204px;letter-spacing:0.1px;">04/04/2022</span>
<span class="t" style="left:751.5px;top:204px;letter-spacing:-0.6px;">16:57</span>
<span class="t" style="left:842px;top:204px;letter-spacing:0.3px;">rwxr-xr-x</span>
<span class="t" style="left:921.3px;top:204px;">1</span>
<span class="t" style="left:691.5px;top:221px;letter-spacing:0.1px;">25/08/2022</span>
<span class="t" style="left:751.5px;top:221px;letter-spacing:-0.6px;">20:32</span>
<span class="t" style="left:842px;top:221px;letter-spacing:0.3px;">rwxr-xr-x</span>
<span class="t" style="left:921.3px;top:221px;">1</span>
<span class="t" style="left:691.5px;top:238px;letter-spacing:0.1px;">18/07/2022</span>
<span class="t" style="left:751.5px;top:238px;letter-spacing:-0.6px;">00:28</span>
<span class="t" style="left:842px;top:238px;letter-spacing:0.3px;">rwxr-xr-x</span>
<span class="t" style="left:921.3px;top:238px;">1</span>
<span class="t" style="left:691.5px;top:255px;letter-spacing:0.1px;">27/08/2022</span>
<span class="t" style="left:751.5px;top:255px;letter-spacing:-0.6px;">14:25</span>
<span class="t" style="left:842px;top:255px;letter-spacing:0.3px;">rwxr-xr-x</span>
<span class="t" style="left:921.3px;top:255px;">1</span>
<span class="t" style="left:691.5px;top:272px;letter-spacing:0.1px;">18/07/2022</span>
<span class="t" style="left:751.5px;top:272px;letter-spacing:-0.6px;">00:28</span>
<span class="t" style="left:842px;top:272px;letter-spacing:0.3px;">rwxr-xr-x</span>
<span class="t" style="left:921.3px;top:272px;">1</span>
<span class="t" style="left:691.5px;top:289px;letter-spacing:0.1px;">21/08/2022</span>
<span class="t" style="left:751.5px;top:289px;letter-spacing:-0.44px;">11:50</span>
<span class="t" style="left:842px;top:289px;letter-spacing:0.3px;">rwxr-xr-x</span>
<span class="t" style="left:921.3px;top:289px;">1</span>
<span class="t" style="left:691.5px;top:306px;letter-spacing:0.1px;">18/07/2022</span>
<span class="t" style="left:751.5px;top:306px;letter-spacing:-0.6px;">00:28</span>
<span class="t" style="left:842px;top:306px;letter-spacing:0.3px;">rwxr-xr-x</span>
<span class="t" style="left:921.3px;top:306px;">1</span>
<span class="t" style="left:691.5px;top:323px;letter-spacing:0.1px;">18/07/2022</span>
<span class="t" style="left:751.5px;top:323px;letter-spacing:-0.6px;">00:28</span>
<span class="t" style="left:842px;top:323px;letter-spacing:0.3px;">rwxr-xr-x</span>
<span class="t" style="left:921.3px;top:323px;">1</span>
<span class="t" style="left:691.5px;top:340px;letter-spacing:0.1px;">18/07/2022</span>
<span class="t" style="left:751.5px;top:340px;letter-spacing:-0.6px;">00:28</span>
<span class="t" style="left:842px;top:340px;letter-spacing:0.3px;">rwxr-xr-x</span>
<span class="t" style="left:921.3px;top:340px;">1</span>
<span class="t" style="left:691.5px;top:357px;letter-spacing:0.1px;">22/07/2022</span>
<span class="t" style="left:751.5px;top:357px;letter-spacing:-0.6px;">02:00</span>
<span class="t" style="left:842px;top:357px;letter-spacing:0.3px;">rwxr-xr-x</span>
<span class="t" style="left:921.3px;top:357px;">1</span>
<span class="t" style="left:691.5px;top:374px;letter-spacing:0.1px;">25/08/2022</span>
<span class="t" style="left:751.5px;top:374px;letter-spacing:-0.6px;">23:00</span>
<span class="t" style="left:842px;top:374px;letter-spacing:0.3px;">rwxr-xr-x</span>
<span class="t" style="left:921.3px;top:374px;">1</span>
<span class="t" style="left:691.5px;top:391px;letter-spacing:0.1px;">18/07/2022</span>
<span class="t" style="left:751.5px;top:391px;letter-spacing:-0.6px;">00:28</span>
<span class="t" style="left:842px;top:391px;letter-spacing:0.3px;">rwxr-xr-x</span>
<span class="t" style="left:921.3px;top:391px;">1</span>
<span class="t" style="left:691.5px;top:408px;letter-spacing:0.1px;">22/08/2022</span>
<span class="t" style="left:751.5px;top:408px;letter-spacing:-0.6px;">18:24</span>
<span class="t" style="left:842px;top:408px;letter-spacing:0.25px;">rw-r--r--</span>
<span class="t" style="left:921.3px;top:408px;">1</span>
<span class="t" style="left:691.5px;top:425px;letter-spacing:0.1px;">22/08/2022</span>
<span class="t" style="left:751.5px;top:425px;letter-spacing:-0.6px;">17:24</span>
<span class="t" style="left:842px;top:425px;letter-spacing:0.25px;">rw-r--r--</span>
<span class="t" style="left:921.3px;top:425px;">1</span>
<span class="t" style="left:691.5px;top:442px;letter-spacing:0.1px;">27/08/2022</span>
<span class="t" style="left:751.5px;top:442px;letter-spacing:-0.6px;">15:40</span>
<span class="t" style="left:842px;top:442px;letter-spacing:0.25px;">rw-r--r--</span>
<span class="t" style="left:921.3px;top:442px;">1</span>
<span class="t" style="left:691.5px;top:459px;letter-spacing:0.1px;">27/08/2022</span>
<span class="t" style="left:751.5px;top:459px;letter-spacing:-0.6px;">14:26</span>
<span class="t" style="left:842px;top:459px;letter-spacing:0.25px;">rw-r--r--</span>
<span class="t" style="left:921.3px;top:459px;">1</span>
<span class="t" style="left:691.5px;top:476px;letter-spacing:0.1px;">25/08/2022</span>
<span class="t" style="left:751.5px;top:476px;letter-spacing:-0.6px;">22:58</span>
<span class="t" style="left:842px;top:476px;letter-spacing:0.25px;">rw-r--r--</span>
<span class="t" style="left:921.3px;top:476px;">1</span>
<span class="t" style="left:691.5px;top:493px;letter-spacing:0.1px;">30/07/2022</span>
<span class="t" style="left:751.5px;top:493px;letter-spacing:-0.6px;">22:06</span>
<span class="t" style="left:842px;top:493px;letter-spacing:0.25px;">rw-r--r--</span>
<span class="t" style="left:921.3px;top:493px;">1</span>
<span class="t" style="left:691.5px;top:510px;letter-spacing:0.1px;">25/08/2022</span>
<span class="t" style="left:751.5px;top:510px;letter-spacing:-0.6px;">17:02</span>
<span class="t" style="left:842px;top:510px;letter-spacing:0.25px;">rw-r--r--</span>
<span class="t" style="left:921.3px;top:510px;">1</span>
<div style="left:467px;top:199px;width:222px;height:4px;background:#c0c0c0;"></div>
<div style="left:467px;top:202px;width:224px;height:326px;background:#c0c0c0;"></div>
<div style="left:925px;top:167px;width:1px;height:437px;background:#d4d0c8"></div>
<div style="left:926px;top:166px;width:1px;height:439px;background:#fff"></div>
<div class="sbtrack" style="left:467px;top:587px;width:458px"></div>
<div class="sbbtn" style="left:467px;top:587px"><svg width="16" height="16"><path d="M9 4v7L5.500 7.500z" fill="#000"/></svg></div>
<div class="sbbtn" style="left:909px;top:587px"><svg width="16" height="16"><path d="M7 4v7l3.500-3.500z" fill="#000"/></svg></div>
<div class="sbbtn" style="left:483px;top:587px;width:382px"></div>
<span class="t" style="left:468px;top:611px;letter-spacing:-0.18px;">0 B of 2,87 GB in 0 of 19</span>
<span class="t" style="left:840px;top:611px;width:83px;text-align:right;letter-spacing:-0.2px">13 hidden</span>
<div class="sc" style="left:-1px;top:628px;width:706px"></div>
<div class="sc" style="left:707px;top:628px;width:33px"></div>
<div class="sc" style="left:742px;top:628px;width:67px"></div>
<div class="sc" style="left:812px;top:628px;width:33px"></div>
<div class="sc" style="left:847px;top:628px;width:80px"></div>
<svg class="ic" style="left:715px;top:629.5px" width="16" height="16" viewBox="0 0 16 16"><path d="M4 8V5.500q0-3.500 4-3.500t4 3.500V8" fill="none" stroke="#b0ada7" stroke-width="1.800"/><rect x="2" y="7.500" width="12" height="8.500" rx="1" fill="#bab7b1" stroke="#a9a6a0"/><path d="M3 10h10M3 12h10M3 14h10" stroke="#a9a6a0" stroke-width=".7"/><rect x="7.300" y="10" width="1.400" height="3" fill="#8e8b86"/></svg>
<span class="t" style="left:742px;top:632px;width:67px;text-align:center">FTP</span>
<svg class="ic" style="left:820px;top:629.5px" width="16" height="16" viewBox="0 0 16 16"><rect x=".5" y="1.500" width="9" height="8" rx="1" fill="#c9c6c0" stroke="#b3b0aa"/><path d="M1 4h8M1 6h8M1 8h8" stroke="#dedbd5"/><path d="M9.500 .5h4v11h-4z" fill="#bebbb5" stroke="#a9a6a0"/><path d="M10.500 11.500v3M7 14.500h8" stroke="#9b9893" stroke-width="1.300"/><circle cx="7" cy="14.500" r="1" fill="#9b9893"/><circle cx="14.500" cy="14.500" r="1" fill="#9b9893"/></svg>
<span class="t" style="left:847px;top:632px;width:74px;text-align:center;letter-spacing:-0.2px">0:00:09</span>
<div style="left:0px;top:650px;width:927px;height:1px;background:#808080"></div>
<div style="left:0px;top:651px;width:927px;height:1px;background:#404040"></div>
<div style="left:-2px;top:171px;width:161px;height:38px;border:5px solid #ed1c24"></div>
<span style="left:100px;top:292px;font:bold 27.500px/31px 'Liberation Sans',sans-serif;color:#ed1c24;white-space:nowrap;letter-spacing:-0.34px">Right click in this square</span>
</body></html>
